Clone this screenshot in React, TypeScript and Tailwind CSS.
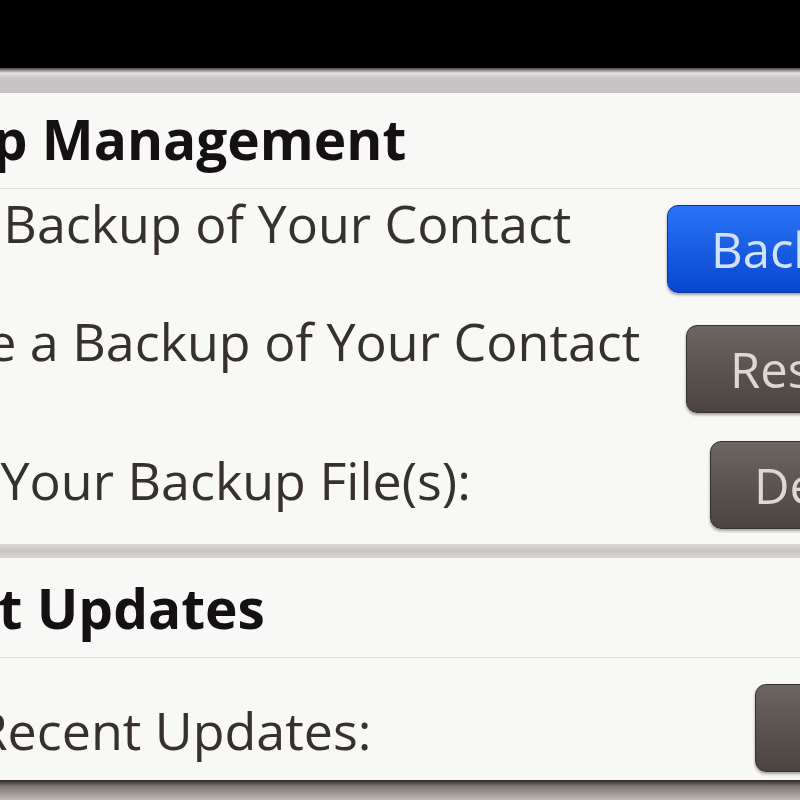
const font = "font-['Open_Sans','Liberation_Sans',sans-serif]";

type Row = {
  label: string;
  button: string;
  blue?: boolean;
  textTop: string; // margin above label
  btnTop: string; // margin above button
  btnWidth: string;
};

const BACKUP_ROWS: Row[] = [
  { label: "Create Backup of Your Contact", button: "Backup", blue: true, textTop: "mt-[8px]", btnTop: "mt-[16px]", btnWidth: "w-[333px]" },
  { label: "Restore a Backup of Your Contact", button: "Restore", textTop: "mt-[22px]", btnTop: "mt-[32px]", btnWidth: "w-[314px]" },
  { label: "Delete Your Backup File(s):", button: "Delete", textTop: "mt-[41px]", btnTop: "mt-[28px]", btnWidth: "w-[290px]" },
];

function ActionButton({ row }: { row: Row }) {
  return (
    <button
      className={`${row.btnTop} ${row.btnWidth} h-[88px] shrink-0 flex items-center pl-[43px] rounded-[11px] text-[49px] leading-none border ${
        row.blue
          ? "bg-gradient-to-b from-[#2a74f6] to-[#0846d0] border-[#0836a0] text-[#d2e2f8] shadow-[0_2px_3px_rgba(0,0,0,0.35)]"
          : "bg-gradient-to-b from-[#6c6561] to-[#4a4340] border-[#38322f] text-[#ddd8d4] shadow-[0_2px_3px_rgba(0,0,0,0.35)]"
      }`}
    >
      {row.button}
    </button>
  );
}

function SettingRow({ row }: { row: Row }) {
  return (
    <div className="flex items-start justify-between">
      <div className={`${row.textTop} text-[52px] font-medium leading-none text-[#37312e] whitespace-nowrap`}>
        {row.label}
      </div>
      <ActionButton row={row} />
    </div>
  );
}

export default function App() {
  return (
    <div className={`w-[800px] h-[800px] overflow-hidden bg-[#f8f8f7] flex flex-col ${font}`}>
      {/* top black bar */}
      <div className="h-[68px] bg-black shrink-0" />
      {/* title strip */}
      <div className="h-[25px] shrink-0 bg-gradient-to-b from-[#4a4446] via-[#e4e0e3] via-20% to-[#c8c4c6] to-40%" />

      <div className="flex flex-col -ml-[170px] -mr-[200px]">
        {/* Backup Management */}
        <div className="pt-[18px] -ml-[6px] text-[55px] font-bold leading-none text-[#151011] whitespace-nowrap">
          Backup Management
        </div>
        <div className="mt-[22px] h-px bg-[#e2dfdd]" />

        {BACKUP_ROWS.map((row) => (
          <SettingRow key={row.button} row={row} />
        ))}

        <div className="mt-[15px] h-[14px] bg-gradient-to-b from-[#dcd9d7] via-[#c9c5c3] to-[#d8d5d3]" />

        {/* Contact Updates */}
        <div className="mt-[22px] -ml-[22px] text-[55px] font-bold leading-none text-[#151011] whitespace-nowrap">
          Contact Updates
        </div>
        <div className="mt-[22px] h-px bg-[#e2dfdd]" />

        <SettingRow
          row={{
            label: "Show Recent Updates:",
            button: "Check",
            textTop: "mt-[46px]",
            btnTop: "mt-[26px]",
            btnWidth: "w-[245px]",
          }}
        />
      </div>

      <div className="mt-auto h-[20px] shrink-0 bg-gradient-to-b from-[#2e2825] via-[#7d7672] via-30% to-[#bdb8b4]" />
    </div>
  );
}
